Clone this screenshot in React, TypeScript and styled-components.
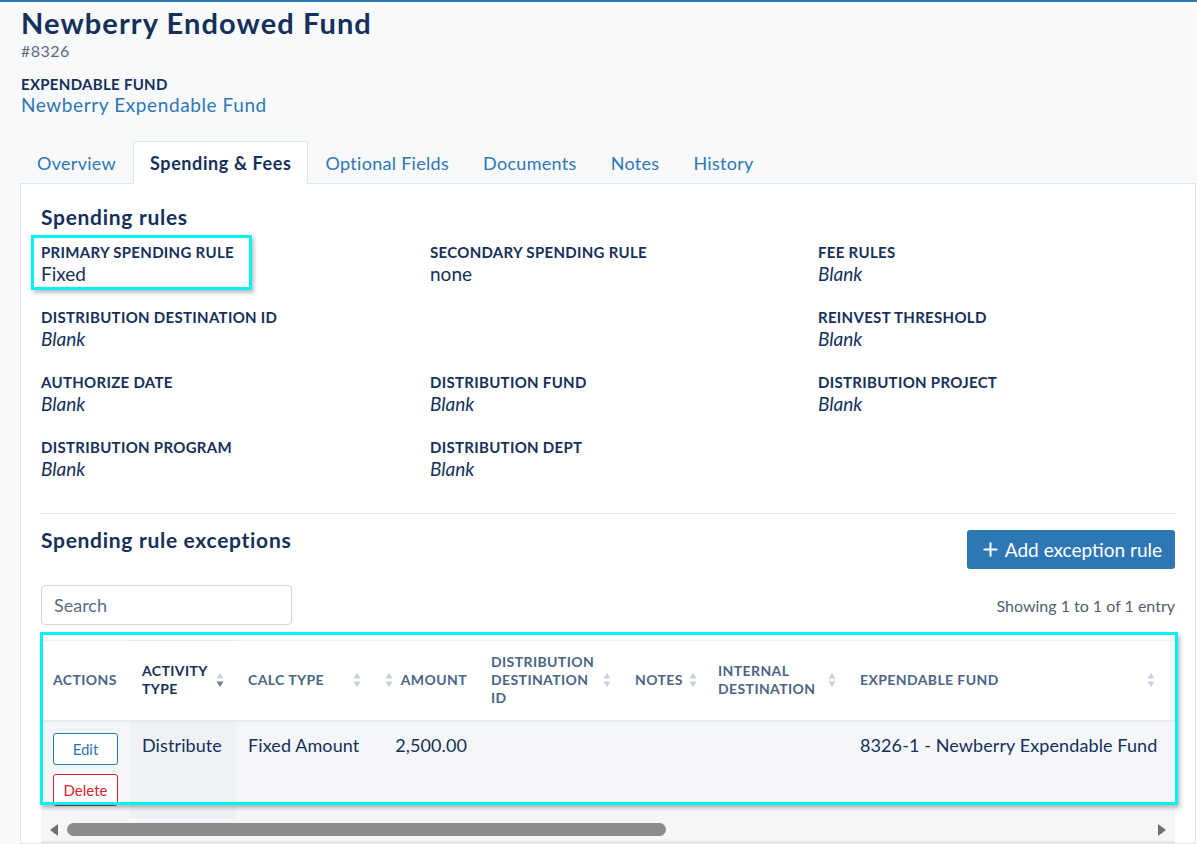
import * as React from "react";
import styled, { createGlobalStyle } from "styled-components";

const navy = "#15305a";
const blue = "#2e77b5";
const muted = "#4a6586";

const GlobalStyle = createGlobalStyle`
  body {
    margin: 0;
    background: #f7f9fb;
    font-family: Lato, "Open Sans", sans-serif;
    color: ${navy};
  }
`;

const Page = styled.div`
  border-top: 2px solid ${blue};
  padding: 0 1px 0 20px;
  min-height: 842px;
  overflow: hidden;
`;

const Header = styled.header`
  padding: 3px 0 0 1px;
`;

const Title = styled.h1`
  margin: 0;
  font-size: 29px;
  line-height: 36px;
  font-weight: 700;
  letter-spacing: 1.1px;
  color: ${navy};
`;

const FundNumber = styled.div`
  font-size: 16px;
  line-height: 20px;
  letter-spacing: 0.5px;
  color: #5b6b80;
`;

const Label = styled.div`
  font-size: 15px;
  line-height: 20px;
  font-weight: 700;
  letter-spacing: 0.3px;
  text-transform: uppercase;
  color: ${navy};
`;

const HeaderLabel = styled(Label)`
  margin-top: 13px;
`;

const FundLink = styled.a`
  display: block;
  font-size: 19px;
  line-height: 22px;
  letter-spacing: 0.6px;
  color: ${blue};
  text-decoration: none;
`;

const Tabs = styled.nav`
  display: flex;
  margin-top: 25px;
`;

const Tab = styled.div<{ $active?: boolean }>`
  height: 42px;
  padding: 0 16px;
  display: flex;
  align-items: center;
  font-size: 18px;
  font-weight: ${(p) => (p.$active ? 700 : 400)};
  letter-spacing: ${(p) => (p.$active ? "0.6px" : "0.3px")};
  color: ${(p) => (p.$active ? navy : blue)};
  background: ${(p) => (p.$active ? "#fff" : "transparent")};
  border: 1px solid ${(p) => (p.$active ? "#dfe6ee" : "transparent")};
  border-bottom: none;
  border-radius: 3px 3px 0 0;
  margin-bottom: -1px;
  position: relative;
`;

const Panel = styled.section`
  background: #fff;
  border: 1px solid #dfe6ee;
  padding: 20px 20px 0 20px;
`;

const SectionTitle = styled.h2`
  margin: 0;
  font-size: 21px;
  line-height: 26px;
  font-weight: 700;
  letter-spacing: 0.7px;
  color: ${navy};
`;

const FieldGrid = styled.div`
  display: grid;
  grid-template-columns: 389px 388px 1fr;
  row-gap: 22px;
  margin-top: 12px;
  padding-bottom: 33px;
  border-bottom: 1px solid #e3e7ec;
`;

const Field = styled.div`
  position: relative;
`;

const FieldValue = styled.div<{ $blank?: boolean }>`
  font-size: 19px;
  line-height: 23px;
  font-style: ${(p) => (p.$blank ? "italic" : "normal")};
  color: ${navy};
`;

const HighlightBox = styled.div<{ $top: number; $left: number; $right: number; $bottom: number }>`
  position: absolute;
  top: ${(p) => p.$top}px;
  left: ${(p) => p.$left}px;
  right: ${(p) => p.$right}px;
  bottom: ${(p) => p.$bottom}px;
  border: 3px solid #00f4f4;
  box-shadow: 2px 3px 4px rgba(0, 0, 0, 0.25);
  pointer-events: none;
  z-index: 2;
`;

const ExceptionsBar = styled.div`
  display: flex;
  justify-content: space-between;
  align-items: flex-start;
  margin-top: 16px;
`;

const ExceptionsTitle = styled(SectionTitle)`
  margin-top: -3px;
`;

const AddButton = styled.button`
  display: flex;
  align-items: center;
  gap: 7px;
  height: 39px;
  padding: 0 13px 0 16px;
  border: none;
  border-radius: 3px;
  background: ${blue};
  color: #fff;
  font-family: inherit;
  font-size: 19px;
`;

const SearchRow = styled.div`
  display: flex;
  justify-content: space-between;
  align-items: center;
  margin-top: 16px;
`;

const SearchInput = styled.input`
  width: 251px;
  height: 40px;
  box-sizing: border-box;
  border: 1px solid #cdd6e0;
  border-radius: 4px;
  padding: 0 12px;
  font-family: inherit;
  font-size: 18px;
  color: ${navy};
  &::placeholder {
    color: #5a6d84;
  }
`;

const ShowingText = styled.div`
  font-size: 16px;
  color: #4f5f73;
`;

const TableFrame = styled.div`
  position: relative;
  margin-top: 15px;
`;

const TableScroll = styled.div`
  overflow: hidden;
`;

const Table = styled.table`
  border-collapse: collapse;
  width: 1300px;
  table-layout: fixed;
`;

const Th = styled.th<{ $sorted?: boolean; $align?: string }>`
  height: 80px;
  box-sizing: border-box;
  padding: 0 12px;
  text-align: ${(p) => p.$align || "left"};
  font-size: 14px;
  line-height: 18px;
  font-weight: 700;
  letter-spacing: 0.4px;
  text-transform: uppercase;
  color: ${(p) => (p.$sorted ? navy : muted)};
  border-top: 1px solid ${(p) => (p.$sorted ? "#dfe6ee" : "#eef1f4")};
  border-bottom: 2px solid #e6ebf0;
  vertical-align: middle;
`;

const ThInner = styled.div<{ $iconFirst?: boolean }>`
  display: flex;
  align-items: center;
  justify-content: space-between;
  gap: 6px;
  flex-direction: ${(p) => (p.$iconFirst ? "row-reverse" : "row")};
`;

const Td = styled.td<{ $sorted?: boolean; $align?: string }>`
  height: 98px;
  box-sizing: border-box;
  padding: 11px 12px 0;
  vertical-align: top;
  text-align: ${(p) => p.$align || "left"};
  font-size: 18px;
  line-height: 24px;
  letter-spacing: 0.1px;
  color: ${navy};
  background: ${(p) => (p.$sorted ? "#eef1f5" : "#f4f6f9")};
  white-space: nowrap;
`;

const RowButton = styled.button<{ $danger?: boolean }>`
  display: block;
  width: 65px;
  height: 32px;
  margin-bottom: 9px;
  border: 1px solid ${(p) => (p.$danger ? "#d8242c" : blue)};
  border-radius: 3px;
  background: #fff;
  color: ${(p) => (p.$danger ? "#d8242c" : blue)};
  font-family: inherit;
  font-size: 15px;
  padding: 0;
`;

const ScrollTrack = styled.div`
  display: flex;
  align-items: center;
  height: 22px;
  background: #f6f6f6;
  border-bottom: 2px solid #e6e6e6;
  padding: 0 8px;
  gap: 8px;
`;

const ScrollThumb = styled.div`
  width: 599px;
  height: 13px;
  border-radius: 7px;
  background: #8c8c8c;
`;

const Spacer = styled.div`
  flex: 1;
`;

function SortIcon({ dir }: { dir?: "asc" | "desc" }) {
  const up = dir === "asc" ? "#6c7d94" : "#c9d0da";
  const down = dir === "desc" ? "#6c7d94" : "#c9d0da";
  return (
    <svg width="8" height="16" viewBox="0 0 8 16" style={{ flexShrink: 0 }}>
      <path d="M4 1 L7.5 6.5 H0.5 Z" fill={up} />
      <path d="M4 15 L7.5 9.5 H0.5 Z" fill={down} />
    </svg>
  );
}

function Arrow({ right }: { right?: boolean }) {
  return (
    <svg width="10" height="12" viewBox="0 0 10 12">
      <path d={right ? "M1 0 L9 6 L1 12 Z" : "M9 0 L1 6 L9 12 Z"} fill="#6f6f6f" />
    </svg>
  );
}

const fields: { label: string; value?: string; col?: number }[] = [
  { label: "Primary spending rule", value: "Fixed" },
  { label: "Secondary spending rule", value: "none" },
  { label: "Fee rules" },
  { label: "Distribution destination ID" },
  { label: "Reinvest threshold", col: 3 },
  { label: "Authorize date" },
  { label: "Distribution fund" },
  { label: "Distribution project" },
  { label: "Distribution program" },
  { label: "Distribution dept" },
];

type Column = {
  key: string;
  title: React.ReactNode;
  width: number;
  align?: string;
  sorted?: boolean;
  sort?: boolean;
  iconFirst?: boolean;
};

const columns: Column[] = [
  { key: "actions", title: "Actions", width: 89 },
  { key: "activity", title: <>Activity<br />Type</>, width: 106, sorted: true, sort: true },
  { key: "calc", title: "Calc Type", width: 137, sort: true },
  { key: "amount", title: "Amount", width: 106, sort: true, iconFirst: true, align: "right" },
  { key: "dest", title: <>Distribution<br />Destination<br />ID</>, width: 144, sort: true },
  { key: "notes", title: "Notes", width: 83, sort: true },
  { key: "internal", title: <>Internal<br />Destination</>, width: 142, sort: true },
  { key: "fund", title: "Expendable Fund", width: 319, sort: true },
  { key: "extra", title: "", width: 174 },
];

export default function App() {
  return (
    <>
      <GlobalStyle />
      <Page>
        <Header>
          <Title>Newberry Endowed Fund</Title>
          <FundNumber>#8326</FundNumber>
          <HeaderLabel>Expendable fund</HeaderLabel>
          <FundLink>Newberry Expendable Fund</FundLink>
        </Header>

        <Tabs>
          <Tab>Overview</Tab>
          <Tab $active>Spending &amp; Fees</Tab>
          <Tab>Optional Fields</Tab>
          <Tab>Documents</Tab>
          <Tab>Notes</Tab>
          <Tab>History</Tab>
        </Tabs>

        <Panel>
          <SectionTitle>Spending rules</SectionTitle>
          <FieldGrid>
            {fields.map((f, i) => (
              <Field key={f.label} style={f.col ? { gridColumn: f.col } : undefined}>
                {i === 0 && <HighlightBox $top={-7} $left={-10} $right={178} $bottom={-5} />}
                <Label>{f.label}</Label>
                <FieldValue $blank={!f.value}>{f.value || "Blank"}</FieldValue>
              </Field>
            ))}
          </FieldGrid>

          <ExceptionsBar>
            <ExceptionsTitle>Spending rule exceptions</ExceptionsTitle>
            <AddButton>
              <svg width="15" height="15" viewBox="0 0 15 15">
                <path d="M7.5 0.5 V14.5 M0.5 7.5 H14.5" stroke="#fff" strokeWidth="2" />
              </svg>
              Add exception rule
            </AddButton>
          </ExceptionsBar>

          <SearchRow>
            <SearchInput placeholder="Search" />
            <ShowingText>Showing 1 to 1 of 1 entry</ShowingText>
          </SearchRow>

          <TableFrame>
            <HighlightBox $top={-8} $left={-1} $right={-3} $bottom={38} />
            <TableScroll>
              <Table>
                <colgroup>
                  {columns.map((c) => (
                    <col key={c.key} style={{ width: c.width }} />
                  ))}
                </colgroup>
                <thead>
                  <tr>
                    {columns.map((c) => (
                      <Th key={c.key} $sorted={c.sorted} $align={c.align}>
                        <ThInner $iconFirst={c.iconFirst}>
                          <span>{c.title}</span>
                          {c.sort && <SortIcon dir={c.sorted ? "desc" : undefined} />}
                        </ThInner>
                      </Th>
                    ))}
                  </tr>
                </thead>
                <tbody>
                  <tr>
                    <Td>
                      <RowButton>Edit</RowButton>
                      <RowButton $danger>Delete</RowButton>
                    </Td>
                    <Td $sorted>Distribute</Td>
                    <Td>Fixed Amount</Td>
                    <Td $align="right">2,500.00</Td>
                    <Td />
                    <Td />
                    <Td />
                    <Td>8326-1 - Newberry Expendable Fund</Td>
                    <Td />
                  </tr>
                </tbody>
              </Table>
            </TableScroll>
            <ScrollTrack>
              <Arrow />
              <ScrollThumb />
              <Spacer />
              <Arrow right />
            </ScrollTrack>
          </TableFrame>
        </Panel>
      </Page>
    </>
  );
}
